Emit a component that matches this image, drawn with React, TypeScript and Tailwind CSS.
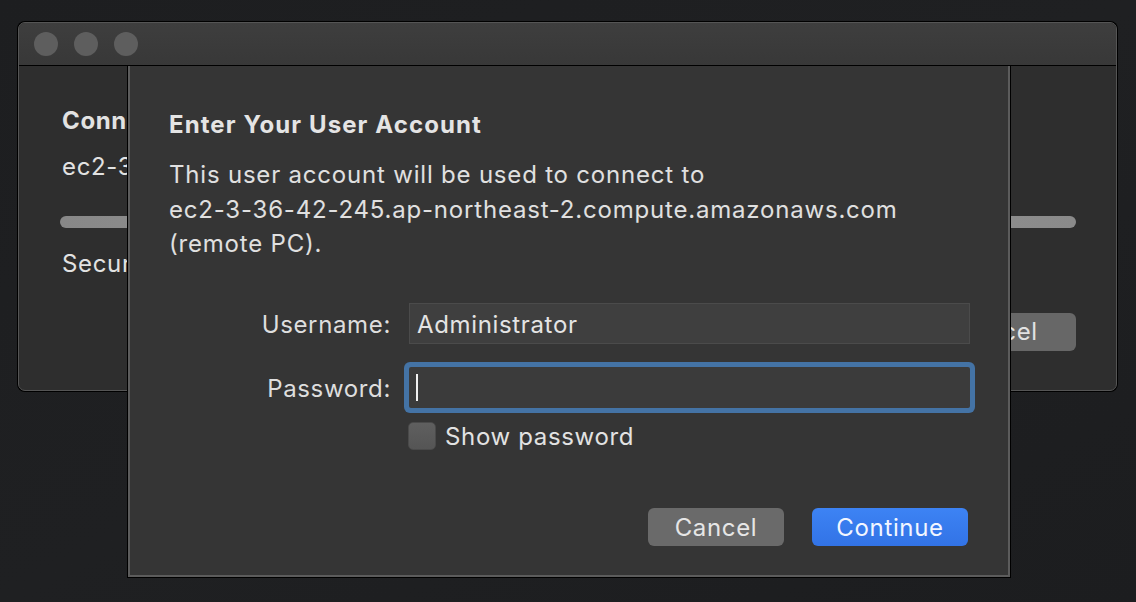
import React from "react";

export default function App() {
  const font = { fontFamily: "Inter, 'Noto Sans', sans-serif" };
  return (
    <div
      className="relative w-[1136px] h-[602px] overflow-hidden bg-gradient-to-br from-[#1d1e20] via-[#1f2022] to-[#1c1d1f] pt-[22px] pl-[18px] text-[#e2e2e2] tracking-[0.65px]"
      style={font}
    >
      {/* background window */}
      <div className="w-[1099px] h-[369px] rounded-[7px] border border-[#555] shadow-[0_0_0_1px_#000] bg-[#2e2e2e] overflow-hidden flex flex-col">
        <div className="h-[43px] shrink-0 bg-gradient-to-b from-[#3e3e3e] to-[#383838] border-b border-black flex items-center pl-[15px] gap-[16px]">
          <div className="w-[24px] h-[24px] rounded-full bg-[#5e5e5e]" />
          <div className="w-[24px] h-[24px] rounded-full bg-[#5e5e5e]" />
          <div className="w-[24px] h-[24px] rounded-full bg-[#5e5e5e]" />
        </div>
        <div className="flex-1 flex flex-col pl-[43px] pr-[40px] pt-[40px]">
          <div className="text-[24px] font-bold leading-[30px]">Connecting</div>
          <div className="text-[24px] leading-[30px] mt-[16px]">ec2-3-36-42-245</div>
          <div className="mt-[34px] h-[12px] rounded-full bg-gradient-to-r from-[#888] via-[#9a9a9a] to-[#8a8a8a] -ml-[2px]" />
          <div className="text-[24px] leading-[30px] mt-[21px]">Securing</div>
          <div className="flex justify-end mt-[34px]">
            <div className="w-[159px] h-[38px] rounded-[6px] bg-[#676767] flex items-center justify-center text-[24px]">Cancel</div>
          </div>
        </div>
      </div>

      {/* sheet dialog */}
      <div className="absolute left-[127px] top-[66px] w-[884px] h-[512px] bg-black pl-px pr-px pb-px">
        <div className="w-full h-full bg-[#353535] border-l-2 border-r-2 border-b-2 border-[#5c5c5c] pl-[39px] pt-[45px] flex flex-col">
          <div className="text-[24px] font-bold leading-[28px] tracking-[1.1px] text-[#e4e4e4]">Enter Your User Account</div>
          <div className="text-[24px] leading-[34.5px] mt-[19px] text-[#e0e0e0] tracking-[0.8px]">
            <div>This user account will be used to connect to</div>
            <div>ec2-3-36-42-245.ap-northeast-2.compute.amazonaws.com</div>
            <div>(remote PC).</div>
          </div>
          <div className="mt-[41px] flex flex-col gap-[23px]">
            <div className="flex items-center">
              <div className="w-[240px] text-right text-[24px] leading-[30px] pt-[4px] text-[#dedede] pr-[18px]">Username:</div>
              <div className="w-[561px] h-[41px] bg-[#3f3f3f] border border-[#4b4b4b] flex items-center pl-[7px] pt-[3px] text-[24px] text-[#e4e4e4]">Administrator</div>
            </div>
            <div className="flex items-center">
              <div className="w-[240px] text-right text-[24px] leading-[30px] pt-[4px] text-[#dedede] pr-[18px]">Password:</div>
              <div className="w-[561px] h-[41px] bg-[#3b3b3b] rounded-[2px] shadow-[0_0_0_5px_#4473a5] flex items-center pl-[7px]">
                <div className="w-[2px] h-[27px] bg-[#f0f0f0]" />
              </div>
            </div>
          </div>
          <div className="flex items-center h-[28px] ml-[239px] mt-[14px] gap-[9px]">
            <div className="w-[28px] h-[28px] rounded-[5px] bg-gradient-to-b from-[#5f5f5f] to-[#555] border border-[#4a4a4a]" />
            <div className="text-[24px] leading-[28px] pt-[3px] text-[#e2e2e2]">Show password</div>
          </div>
          <div className="flex justify-end gap-[28px] mt-[58px] pr-[40px]">
            <div className="w-[136px] h-[38px] rounded-[6px] bg-[#6a6a6a] flex items-center justify-center pt-[2px] text-[24px] text-[#e6e6e6]">Cancel</div>
            <div className="w-[156px] h-[38px] rounded-[6px] bg-gradient-to-b from-[#3d83f4] to-[#3273e6] flex items-center justify-center pt-[2px] text-[24px] text-[#f2f6ff]">Continue</div>
          </div>
        </div>
      </div>
    </div>
  );
}
